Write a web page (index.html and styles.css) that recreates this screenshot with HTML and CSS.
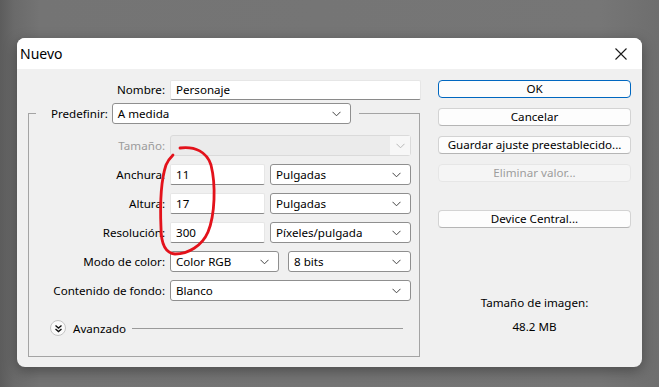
FILE: index.html
```html
<!DOCTYPE html>
<html>
<head>
<meta charset="utf-8">
<link rel="stylesheet" href="styles.css">
</head>
<body>
<div class="dialog">
  <div class="titlebar">
    <span class="title">Nuevo</span>
    <svg class="close" width="14" height="14" viewBox="0 0 14 14"><path d="M1.5 1.5 L12.5 12.5 M12.5 1.5 L1.5 12.5" stroke="#1a1a1a" stroke-width="1.1" fill="none"/></svg>
  </div>
  <div class="content">
    <div class="left">
      <div class="name-row">
        <span class="lbl">Nombre:</span>
        <div class="input wide">Personaje</div>
      </div>
      <fieldset class="group">
        <legend class="legend">
          <span class="lbl">Predefinir:</span>
          <div class="select preset"><span>A medida</span><svg class="chev" width="9" height="6" viewBox="0 0 9 6"><path d="M0.5 0.8 L4.5 4.8 L8.5 0.8" stroke="#444" fill="none"/></svg></div>
        </legend>
        <div class="grid">
          <span class="lbl dis">Tamaño:</span>
          <div class="select disabled"><span></span><span class="chevbox"><svg class="chev" width="9" height="6" viewBox="0 0 9 6"><path d="M0.5 0.8 L4.5 4.8 L8.5 0.8" stroke="#b8b8b8" fill="none"/></svg></span></div>

          <span class="lbl">Anchura:</span>
          <div class="pair"><div class="input num">11</div><div class="select unit"><span>Pulgadas</span><svg class="chev" width="9" height="6" viewBox="0 0 9 6"><path d="M0.5 0.8 L4.5 4.8 L8.5 0.8" stroke="#444" fill="none"/></svg></div></div>

          <span class="lbl">Altura:</span>
          <div class="pair"><div class="input num">17</div><div class="select unit"><span>Pulgadas</span><svg class="chev" width="9" height="6" viewBox="0 0 9 6"><path d="M0.5 0.8 L4.5 4.8 L8.5 0.8" stroke="#444" fill="none"/></svg></div></div>

          <span class="lbl">Resolución:</span>
          <div class="pair"><div class="input num">300</div><div class="select unit"><span>Píxeles/pulgada</span><svg class="chev" width="9" height="6" viewBox="0 0 9 6"><path d="M0.5 0.8 L4.5 4.8 L8.5 0.8" stroke="#444" fill="none"/></svg></div></div>

          <span class="lbl">Modo de color:</span>
          <div class="pair2"><div class="select mode"><span>Color RGB</span><svg class="chev" width="9" height="6" viewBox="0 0 9 6"><path d="M0.5 0.8 L4.5 4.8 L8.5 0.8" stroke="#444" fill="none"/></svg></div><div class="select bits"><span>8 bits</span><svg class="chev" width="9" height="6" viewBox="0 0 9 6"><path d="M0.5 0.8 L4.5 4.8 L8.5 0.8" stroke="#444" fill="none"/></svg></div></div>

          <span class="lbl">Contenido de fondo:</span>
          <div class="select"><span>Blanco</span><svg class="chev" width="9" height="6" viewBox="0 0 9 6"><path d="M0.5 0.8 L4.5 4.8 L8.5 0.8" stroke="#444" fill="none"/></svg></div>
        </div>
        <div class="adv">
          <span class="advicon"><svg width="9" height="9" viewBox="0 0 9 9"><path d="M1.5 1.5 L4.5 4 L7.5 1.5 M1.5 5 L4.5 7.5 L7.5 5" stroke="#111" stroke-width="1.4" fill="none"/></svg></span>
          <span class="advtext">Avanzado</span>
          <span class="advline"></span>
        </div>
      </fieldset>
    </div>
    <div class="right">
      <div class="btn primary">OK</div>
      <div class="btn">Cancelar</div>
      <div class="btn">Guardar ajuste preestablecido...</div>
      <div class="btn off">Eliminar valor...</div>
      <div class="btn device">Device Central...</div>
      <div class="info">
        <div class="info-lbl">Tamaño de imagen:</div>
        <div class="info-val">48.2 MB</div>
      </div>
    </div>
  </div>
</div>
<svg class="mark" width="659" height="387" viewBox="0 0 659 387"><path d="M180,148 C195,146 207,152 211,165 C216,185 215,215 208,232 C202,246 188,254 175,254 C165,253 161,243 161,228 C160,205 161,180 166,165 C168,160 171,157 173,155" stroke="#e3121b" stroke-width="2.8" fill="none" stroke-linecap="round"/></svg>
</body>
</html>
```
FILE: styles.css
```css
html, body {
  margin: 0;
  padding: 0;
}
body {
  width: 659px;
  height: 387px;
  overflow: hidden;
  background: linear-gradient(to right, #5c5c5c 0px, #6a6a6a 14px, #747474 40px, #767676 600px, #6e6e6e 659px);
  font-family: "Noto Sans", "Open Sans", sans-serif;
  font-size: 11.6px;
  color: #000;
  position: relative;
}
.dialog {
  margin: 38px 0 0 17px;
  width: 625px;
  height: 329px;
  border-radius: 8px;
  overflow: hidden;
  background: #f0f0f0;
  box-shadow: 0 4px 14px rgba(0,0,0,0.35);
}
.titlebar {
  height: 31px;
  background: #fff;
  display: flex;
  align-items: center;
  justify-content: space-between;
  padding: 0 14px 0 3px;
}
.title {
  font-size: 14px;
  color: #000;
}
.content {
  display: flex;
  padding: 11px 11px 0 11px;
  gap: 17px;
}
.left {
  width: 393px;
  display: flex;
  flex-direction: column;
}
.lbl {
  text-align: right;
  white-space: nowrap;
  line-height: 20px;
}
.dis { color: #9b9b9b; }
.name-row {
  display: grid;
  grid-template-columns: 137px 251px;
  column-gap: 5px;
  height: 20px;
}
.input {
  box-sizing: border-box;
  height: 20px;
  background: #fff;
  border: 1px solid #e6e6e6;
  border-bottom: 1px solid #8a8a8a;
  border-radius: 2px;
  padding: 0 5px;
  line-height: 18px;
}
.select {
  box-sizing: border-box;
  height: 21px;
  background: #fff;
  border: 1px solid #8f8f8f;
  border-radius: 3px;
  display: flex;
  align-items: center;
  justify-content: space-between;
  padding: 0 9px 0 5px;
  line-height: 19px;
  white-space: nowrap;
}
.chev { flex: none; }
.group {
  margin: 3px 0 0 0;
  width: 392px;
  box-sizing: border-box;
  border: 1px solid #a4a4a4;
  border-radius: 0;
  padding: 0 7px 0 0;
  min-width: 0;
}
.legend {
  margin-left: 7px;
  padding: 0 8px 0 15px;
  display: flex;
  align-items: center;
  gap: 4px;
}
.preset { width: 239px; }
.grid {
  margin-top: 11px;
  display: grid;
  grid-template-columns: 136px 241px;
  column-gap: 5px;
  row-gap: 8px;
  grid-auto-rows: 21px;
}
.grid .lbl { line-height: 21px; }
.disabled {
  background: #ebebeb;
  border: 1px solid #dadada;
  padding: 0;
}
.chevbox {
  width: 20px;
  height: 19px;
  background: #f7f7f7;
  display: flex;
  align-items: center;
  justify-content: center;
}
.pair {
  display: flex;
  gap: 5px;
}
.pair .input { width: 95px; height: 21px; line-height: 19px; }
.pair .select { flex: 1; }
.pair2 {
  display: flex;
  gap: 9px;
}
.mode { width: 109px; }
.bits { flex: 1; }
.adv {
  display: flex;
  align-items: center;
  height: 16px;
  margin: 19px 9px 20px 21px;
}
.advicon {
  width: 14px;
  height: 14px;
  border-radius: 50%;
  background: #fafafa;
  border: 1px solid #c4c4c4;
  display: flex;
  align-items: center;
  justify-content: center;
}
.advtext {
  margin-left: 7px;
}
.advline {
  flex: 1;
  height: 1px;
  background: #9a9a9a;
  margin-left: 6px;
}
.right {
  width: 193px;
  display: flex;
  flex-direction: column;
  gap: 10px;
}
.btn {
  box-sizing: border-box;
  height: 18px;
  background: #fdfdfd;
  border: 1px solid #d3d3d3;
  border-bottom-color: #b5b5b5;
  border-radius: 4px;
  text-align: center;
  line-height: 16px;
  white-space: nowrap;
}
.primary {
  border: 1px solid #0067c0;
}
.off {
  background: #f5f5f5;
  border-color: #e6e6e6;
  color: #9d9d9d;
}
.device { margin-top: 18px; }
.info {
  margin-top: 57px;
  text-align: center;
}
.info-lbl { line-height: 16px; }
.info-val { line-height: 16px; margin-top: 8px; }
.mark {
  position: absolute;
  left: 0;
  top: 0;
  pointer-events: none;
}
```
